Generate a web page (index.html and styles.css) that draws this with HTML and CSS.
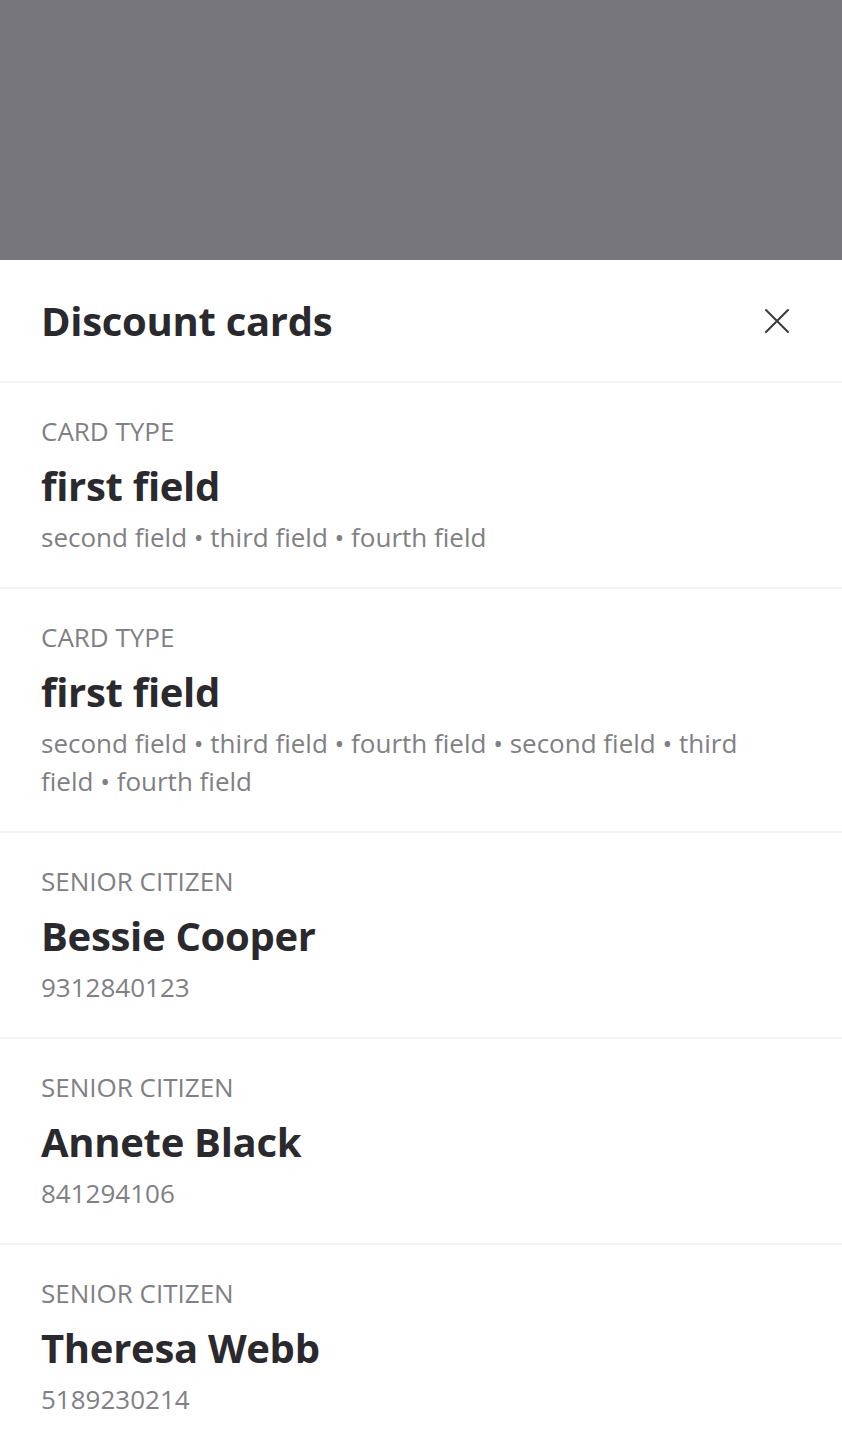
FILE: index.html
```html
<!DOCTYPE html>
<html lang="en">
<head>
<meta charset="utf-8">
<link rel="stylesheet" href="styles.css">
<title>Discount cards</title>
</head>
<body>
<div class="backdrop"></div>
<div class="sheet">
  <header class="sheet-header">
    <h1 class="sheet-title">Discount cards</h1>
    <button class="close" aria-label="Close">
      <svg width="26" height="26" viewBox="0 0 26 26"><path d="M2 2 L24 24 M24 2 L2 24" stroke="#3a393e" stroke-width="2" stroke-linecap="round" fill="none"/></svg>
    </button>
  </header>
  <ul class="cards">
    <li class="card">
      <div class="card-label">CARD TYPE</div>
      <div class="card-title">first field</div>
      <div class="card-sub">second field • third field • fourth field</div>
    </li>
    <li class="card">
      <div class="card-label">CARD TYPE</div>
      <div class="card-title">first field</div>
      <div class="card-sub">second field • third field • fourth field • second field • third field • fourth field</div>
    </li>
    <li class="card">
      <div class="card-label">SENIOR CITIZEN</div>
      <div class="card-title">Bessie Cooper</div>
      <div class="card-sub">9312840123</div>
    </li>
    <li class="card">
      <div class="card-label">SENIOR CITIZEN</div>
      <div class="card-title">Annete Black</div>
      <div class="card-sub">841294106</div>
    </li>
    <li class="card">
      <div class="card-label">SENIOR CITIZEN</div>
      <div class="card-title">Theresa Webb</div>
      <div class="card-sub">5189230214</div>
    </li>
  </ul>
</div>
</body>
</html>
```
FILE: styles.css
```css
* { box-sizing: border-box; }
html, body { margin: 0; padding: 0; }
body {
  font-family: "Open Sans", "Noto Sans", sans-serif;
  background: #ffffff;
  width: 842px;
  height: 1448px;
  overflow: hidden;
}
.backdrop {
  height: 260px;
  background: #77767b;
}
.sheet {
  background: #ffffff;
}
.sheet-header {
  display: flex;
  align-items: center;
  justify-content: space-between;
  height: 123px;
  padding: 0 52px 0 41px;
  border-bottom: 2px solid #f2f2f3;
}
.sheet-title {
  margin: 0;
  font-size: 40px;
  font-weight: 700;
  color: #2a292e;
  letter-spacing: -0.3px;
}
.close {
  border: 0;
  background: none;
  padding: 0;
  display: flex;
  cursor: pointer;
}
.cards {
  list-style: none;
  margin: 0;
  padding: 0;
}
.card {
  padding: 31px 41px 31px;
  border-bottom: 2px solid #f2f2f3;
}
.card-label {
  font-size: 26px;
  line-height: 34px;
  color: #808084;
}
.card-title {
  margin-top: 10px;
  font-size: 40px;
  line-height: 56px;
  font-weight: 700;
  color: #2a292e;
  letter-spacing: -0.3px;
}
.card-sub {
  margin-top: 4px;
  font-size: 26px;
  line-height: 38px;
  color: #808084;
  padding-right: 60px;
}
```
